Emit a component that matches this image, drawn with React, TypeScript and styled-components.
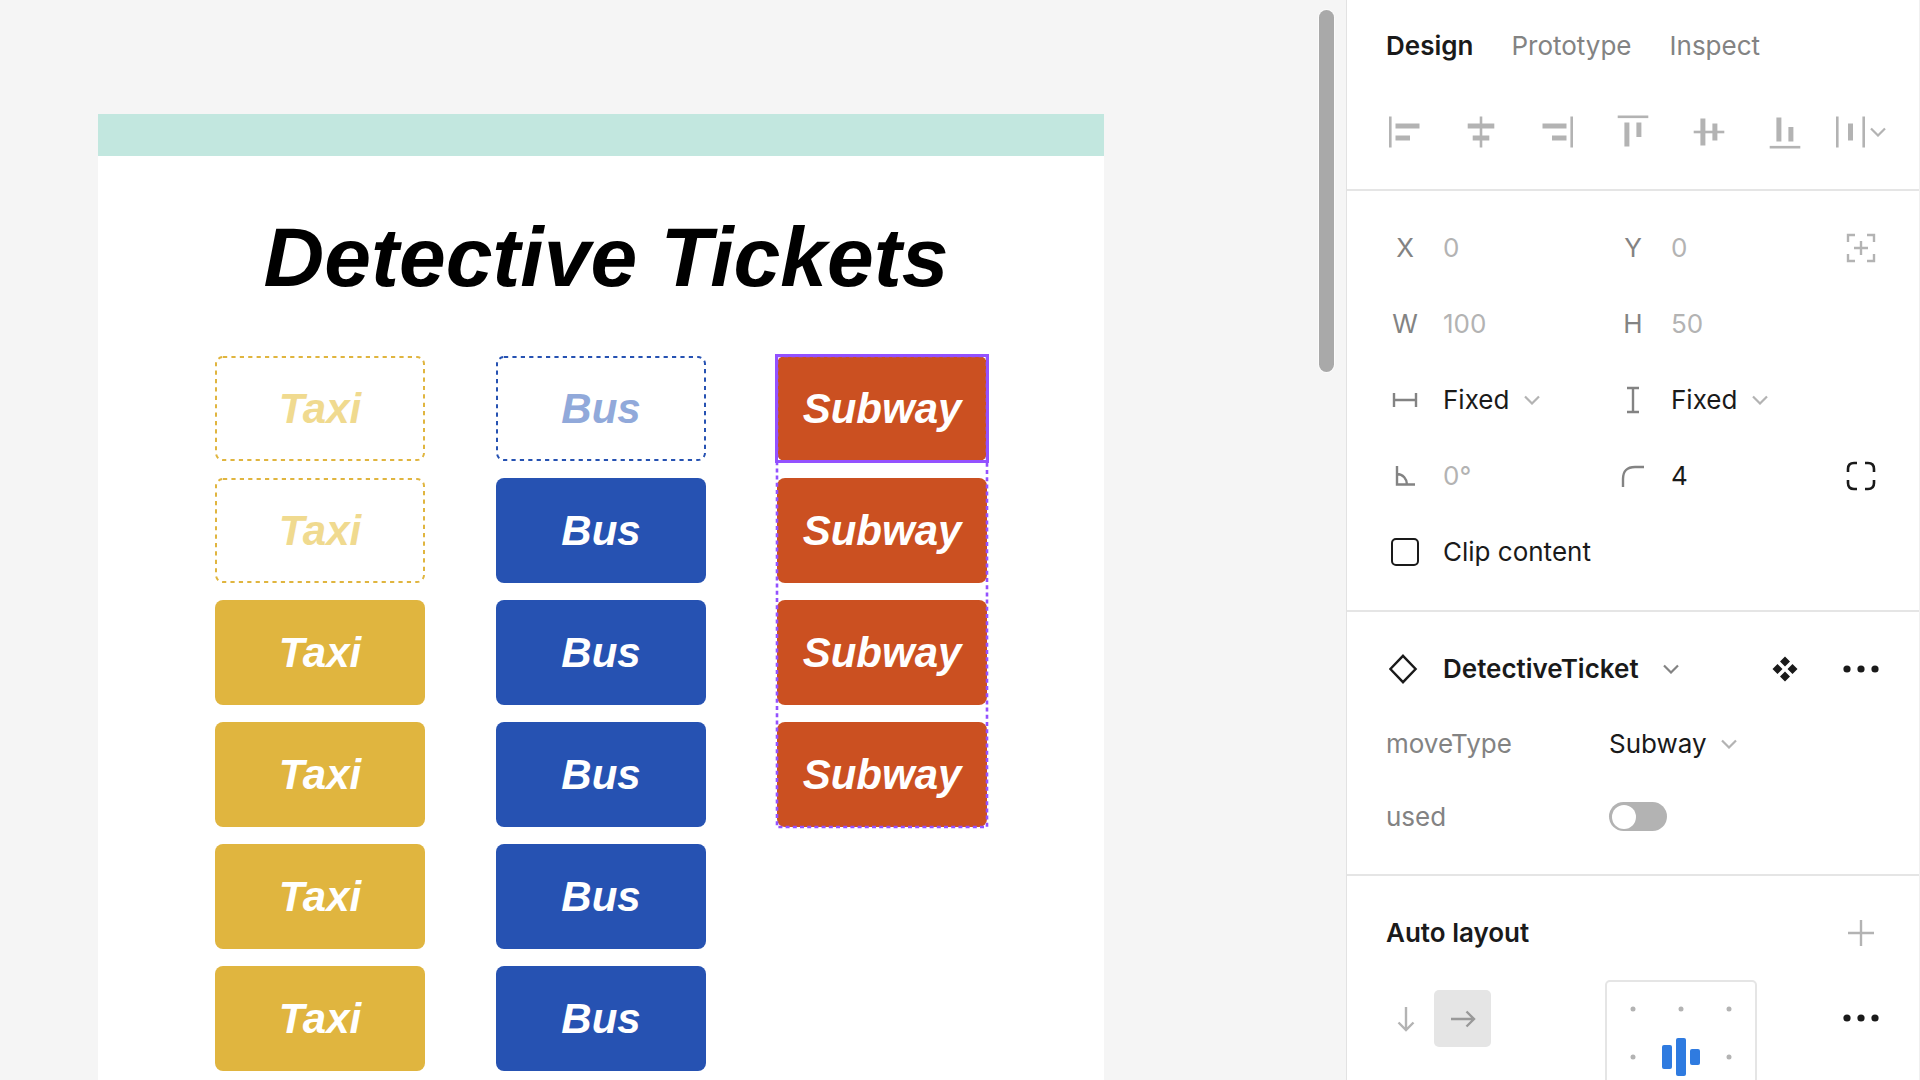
import React from 'react';
import styled, { createGlobalStyle } from 'styled-components';

const GlobalStyle = createGlobalStyle`
  *, *::before, *::after { box-sizing: border-box; }
  body { margin: 0; overflow: hidden; }
  button, input, select { font: inherit; color: inherit; }
`;

const color = {
  text: '#1a1a1a',
  muted: '#838383',
  faint: '#b3b3b3',
  line: '#e5e5e5',
  canvas: '#f5f5f5',
  select: '#9351ff',
};

const Screen = styled.div`
  display: flex;
  height: 100vh;
  overflow: hidden;
  background: ${color.canvas};
`;

/* ---------- Canvas ---------- */

const Canvas = styled.main`
  position: relative;
  flex: 1;
  min-width: 0;
  display: flex;
  padding: 114px 242px 0 98px;
  overflow: hidden;
  font-family: "Liberation Sans", Arial, Helvetica, sans-serif;
`;

const ScrollThumb = styled.div`
  position: absolute;
  top: 10px;
  right: 12px;
  width: 15px;
  height: 362px;
  border-radius: 8px;
  background: #a9a9a9;
  box-shadow: 0 0 0 1px #fbfbfb;
`;

const Board = styled.section`
  flex: 1;
  min-width: 0;
  min-height: 100%;
  background: #fff;
  border-top: 42px solid #c2e7df;
  padding-top: 59px;
`;

const BoardTitle = styled.h1`
  margin: 0 0 57px;
  padding-left: 10px;
  font-size: 84px;
  line-height: 84px;
  font-style: italic;
  font-weight: 700;
  color: #000;
  text-align: center;
  white-space: nowrap;
`;

const Columns = styled.div`
  display: flex;
  justify-content: center;
  align-items: flex-start;
  gap: 71px;
`;

const Column = styled.div`
  position: relative;
  display: flex;
  flex-direction: column;
  gap: 17px;
`;

type Move = 'Taxi' | 'Bus' | 'Subway';

const palette: Record<Move, { fill: string; used: string }> = {
  Taxi: { fill: '#e0b53f', used: '#f0da8f' },
  Bus: { fill: '#2652b2', used: '#91a9da' },
  Subway: { fill: '#cb5021', used: '#e5a78f' },
};

const TicketBox = styled.div<{ $move: Move; $used: boolean }>`
  position: relative;
  display: flex;
  align-items: center;
  justify-content: center;
  width: 210px;
  height: 105px;
  border-radius: 8px;
  font-size: 42px;
  line-height: 48px;
  font-style: italic;
  font-weight: 700;
  background: ${(p) => (p.$used ? 'transparent' : palette[p.$move].fill)};
  color: ${(p) => (p.$used ? palette[p.$move].used : '#fff')};
`;

const Overlay = styled.svg<{ $inset: number }>`
  position: absolute;
  top: ${(p) => p.$inset}px;
  left: ${(p) => p.$inset}px;
  width: calc(100% - ${(p) => p.$inset * 2}px);
  height: calc(100% - ${(p) => p.$inset * 2}px);
  overflow: visible;
  pointer-events: none;
`;

const Selected = styled.div`
  position: absolute;
  inset: -2px;
  border: 3px solid ${color.select};
`;

function Dashes({ stroke, dash, radius = 0, inset = 0, width = 2 }: { stroke: string; dash: string; radius?: number; inset?: number; width?: number }) {
  return (
    <Overlay $inset={inset} aria-hidden="true">
      <rect width="100%" height="100%" rx={radius} fill="none" stroke={stroke} strokeWidth={width} strokeDasharray={dash} />
    </Overlay>
  );
}

function Ticket({ move, used = false, selected = false }: { move: Move; used?: boolean; selected?: boolean }) {
  return (
    <TicketBox $move={move} $used={used}>
      {move}
      {used && <Dashes stroke={palette[move].fill} dash="4.2 4.2" radius={7} inset={1} />}
      {selected && <Selected />}
    </TicketBox>
  );
}

/* ---------- Panel ---------- */

const Panel = styled.aside`
  flex: 0 0 574px;
  background: #fff;
  border-left: 1px solid #e2e2e2;
  border-right: 1px solid #f0f0f0;
  color: ${color.text};
  font-family: Inter, "Liberation Sans", sans-serif;
  font-size: 26px;
  line-height: 32px;
  overflow: hidden;
`;

const Section = styled.section<{ $top?: number; $bottom?: number }>`
  padding: ${(p) => p.$top ?? 19}px 20px ${(p) => p.$bottom ?? 20}px;
  border-bottom: 2px solid ${color.line};
`;

const Tabs = styled.nav`
  display: flex;
  align-items: center;
  gap: 38px;
  height: 76px;
  padding-left: 19px;
`;

const Tab = styled.button<{ $active?: boolean }>`
  padding: 0;
  border: 0;
  background: none;
  cursor: pointer;
  font-weight: ${(p) => (p.$active ? 600 : 400)};
  color: ${(p) => (p.$active ? color.text : color.muted)};
`;

const Row = styled.div<{ $h?: number }>`
  display: grid;
  grid-template-columns: repeat(7, minmax(0, 1fr));
  align-items: center;
  height: ${(p) => p.$h ?? 76}px;
`;

const IconButton = styled.button<{ $c?: string }>`
  display: flex;
  align-items: center;
  justify-content: center;
  height: 56px;
  padding: 0;
  border: 0;
  background: none;
  cursor: pointer;
  color: ${(p) => p.$c ?? color.faint};
`;

const Field = styled.label`
  grid-column: span 3;
  display: grid;
  grid-template-columns: 1fr 2fr;
  align-items: center;
`;

const Mark = styled.span<{ $c?: string }>`
  display: flex;
  justify-content: center;
  color: ${(p) => p.$c ?? color.muted};
`;

const TextInput = styled.input<{ $strong?: boolean }>`
  width: 100%;
  min-width: 0;
  padding: 0;
  border: 0;
  outline: 0;
  background: none;
  color: ${(p) => (p.$strong ? color.text : color.faint)};
`;

const Picker = styled.span`
  display: flex;
  align-items: center;
  gap: 14px;
  color: ${color.faint};
`;

const Select = styled.select`
  appearance: none;
  padding: 0;
  border: 0;
  outline: 0;
  background: none;
  color: ${color.text};
  cursor: pointer;
`;

const Check = styled.input`
  appearance: none;
  width: 28px;
  height: 28px;
  margin: 0;
  border: 2px solid ${color.text};
  border-radius: 5px;
`;

const CheckLabel = styled.label`
  grid-column: span 5;
`;

const ComponentName = styled.button`
  grid-column: span 4;
  display: flex;
  align-items: center;
  gap: 24px;
  padding: 0;
  border: 0;
  background: none;
  cursor: pointer;
  font-weight: 600;
  svg { color: ${color.muted}; }
`;

const PropLabel = styled.label`
  grid-column: span 3;
  padding-left: 19px;
  color: ${color.muted};
`;

const PropValue = styled.div`
  grid-column: span 4;
  padding-left: 14px;
`;

const Toggle = styled.input`
  appearance: none;
  display: flex;
  align-items: center;
  width: 58px;
  height: 29px;
  margin: 0;
  padding: 0 3px;
  border-radius: 15px;
  background: ${color.faint};
  cursor: pointer;
  &::before {
    content: '';
    width: 24px;
    height: 24px;
    border-radius: 50%;
    background: #fff;
  }
  &:checked { justify-content: flex-end; }
`;

const SectionTitle = styled.h2`
  grid-column: span 6;
  margin: 0;
  padding-left: 19px;
  font-size: 26px;
  line-height: 32px;
  font-weight: 600;
`;

const LayoutRow = styled.div`
  display: grid;
  grid-template-columns: repeat(7, minmax(0, 1fr));
  align-items: start;
  padding-top: 9px;
`;

const Directions = styled.div`
  grid-column: span 3;
  display: flex;
  padding: 10px 0 0 10px;
`;

const Direction = styled.button<{ $on?: boolean }>`
  display: flex;
  align-items: center;
  justify-content: center;
  width: 57px;
  height: 57px;
  padding: 0;
  border: 0;
  border-radius: 5px;
  cursor: pointer;
  background: ${(p) => (p.$on ? color.line : 'none')};
  color: ${(p) => (p.$on ? '#999' : color.faint)};
`;

const AlignSlot = styled.div`
  grid-column: span 3;
  padding-left: 10px;
`;

const AlignBox = styled.button`
  display: block;
  width: 152px;
  height: 154px;
  padding: 0;
  border: 2px solid ${color.line};
  border-radius: 5px;
  background: #fff;
`;

const MoreSlot = styled.div`
  display: grid;
  padding-top: 10px;
`;

/* ---------- Icons ---------- */

type Box = [number, number, number, number];

/* Filled bars on a field 34 high */
function Bars({ bars, w = 32 }: { bars: Box[]; w?: number }) {
  return (
    <svg width={w} height="34" viewBox={`0 0 ${w} 34`} fill="currentColor" aria-hidden="true">
      {bars.map(([x, y, bw, bh], i) => (
        <rect key={i} x={x} y={y} width={bw} height={bh} />
      ))}
    </svg>
  );
}

function Stroke({ d, w = 30, h = 30, sw = 2.4 }: { d: string; w?: number; h?: number; sw?: number }) {
  return (
    <svg width={w} height={h} viewBox={`0 0 ${w} ${h}`} fill="none" stroke="currentColor" strokeWidth={sw} aria-hidden="true">
      <path d={d} />
    </svg>
  );
}

const Chevron = () => <Stroke w={16} h={10} sw={2.2} d="M1 1.5 L8 8.5 L15 1.5" />;

const Dots = () => (
  <svg width="36" height="8" viewBox="0 0 36 8" fill="currentColor" aria-hidden="true">
    <circle cx="4" cy="4" r="3.6" />
    <circle cx="18" cy="4" r="3.6" />
    <circle cx="32" cy="4" r="3.6" />
  </svg>
);

const alignIcons: { name: string; bars: Box[] }[] = [
  { name: 'Align left', bars: [[0, 1.5, 2.6, 31], [6.5, 8.5, 24, 5], [6.5, 20.5, 14.5, 5]] },
  { name: 'Align horizontal centers', bars: [[14.7, 1.5, 2.6, 31], [2.7, 8.5, 26.6, 5], [7.7, 20.5, 16.6, 5]] },
  { name: 'Align right', bars: [[29.4, 1.5, 2.6, 31], [1.5, 8.5, 24, 5], [11, 20.5, 14.5, 5]] },
  { name: 'Align top', bars: [[0.7, 0.5, 30.6, 2.6], [7.4, 7.5, 5, 24], [19.4, 7.5, 5, 14.5]] },
  { name: 'Align vertical centers', bars: [[0.7, 15.7, 30.6, 2.6], [7.4, 3.5, 5, 27], [19.4, 8.5, 5, 17]] },
  { name: 'Align bottom', bars: [[0.7, 30.9, 30.6, 2.6], [7.4, 2.5, 5, 24], [19.4, 12, 5, 14.5]] },
];

const AlignGrid = () => (
  <svg width="148" height="150" viewBox="0 0 148 150" fill={color.faint} aria-hidden="true">
    {[27, 75, 123].map((y) =>
      [26, 74, 122].map((x) => (x === 74 && y === 75 ? null : <circle key={`${x}-${y}`} cx={x} cy={y} r="2.5" />)),
    )}
    <g fill="#2f7be0">
      <rect x="55" y="63" width="10" height="24" rx="2" />
      <rect x="69" y="56" width="10" height="38" rx="2" />
      <rect x="83" y="67" width="10" height="16" rx="2" />
    </g>
  </svg>
);

/* ---------- Screen ---------- */

export default function App() {
  return (
    <Screen>
      <GlobalStyle />
      <Canvas>
        <Board>
          <BoardTitle>Detective Tickets</BoardTitle>
          <Columns>
            <Column>
              {[true, true, false, false, false, false].map((used, i) => (
                <Ticket key={i} move="Taxi" used={used} />
              ))}
            </Column>
            <Column>
              {[true, false, false, false, false, false].map((used, i) => (
                <Ticket key={i} move="Bus" used={used} />
              ))}
            </Column>
            <Column>
              {[true, false, false, false].map((selected, i) => (
                <Ticket key={i} move="Subway" selected={selected} />
              ))}
              <Dashes stroke={color.select} dash="4 3.2" width={2.6} />
            </Column>
          </Columns>
        </Board>
        <ScrollThumb />
      </Canvas>

      <Panel>
        <Section $top={8} $bottom={10}>
          <Tabs>
            <Tab $active>Design</Tab>
            <Tab>Prototype</Tab>
            <Tab>Inspect</Tab>
          </Tabs>
          <Row $h={95}>
            {alignIcons.map((icon) => (
              <IconButton key={icon.name} aria-label={icon.name}>
                <Bars bars={icon.bars} />
              </IconButton>
            ))}
            <IconButton aria-label="Distribute">
              <Bars w={34} bars={[[0, 1.5, 2.6, 31], [12, 8.5, 5, 17], [26.4, 1.5, 2.6, 31]]} />
              <Chevron />
            </IconButton>
          </Row>
        </Section>

        <Section>
          <Row>
            <Field><Mark>X</Mark><TextInput defaultValue="0" /></Field>
            <Field><Mark>Y</Mark><TextInput defaultValue="0" /></Field>
            <IconButton aria-label="Absolute position">
              <Stroke d="M2 9V2H9 M21 2H28V9 M28 21V28H21 M9 28H2V21 M15 8V22 M8 15H22" />
            </IconButton>
          </Row>
          <Row>
            <Field><Mark>W</Mark><TextInput defaultValue="100" /></Field>
            <Field><Mark>H</Mark><TextInput defaultValue="50" /></Field>
          </Row>
          <Row>
            <Field>
              <Mark><Stroke w={26} h={14} d="M2 0V14 M24 0V14 M2 7H24" /></Mark>
              <Picker>
                <Select aria-label="Horizontal resizing"><option>Fixed</option><option>Hug</option><option>Fill</option></Select>
                <Chevron />
              </Picker>
            </Field>
            <Field>
              <Mark><Stroke w={14} h={28} d="M1 2H13 M1 26H13 M7 2V26" /></Mark>
              <Picker>
                <Select aria-label="Vertical resizing"><option>Fixed</option><option>Hug</option><option>Fill</option></Select>
                <Chevron />
              </Picker>
            </Field>
          </Row>
          <Row>
            <Field>
              <Mark><Stroke w={20} h={20} d="M2 0V18.5H20 M2 8C8 8 12 13 12 18.5" /></Mark>
              <TextInput aria-label="Rotation" defaultValue="0°" />
            </Field>
            <Field>
              <Mark><Stroke w={24} h={22} d="M2 22V14Q2 2 14 2H23" /></Mark>
              <TextInput aria-label="Corner radius" $strong defaultValue="4" />
            </Field>
            <IconButton $c={color.text} aria-label="Independent corners">
              <Stroke sw={2.6} d="M2 11V8Q2 2 8 2H11 M19 2H22Q28 2 28 8V11 M28 19V22Q28 28 22 28H19 M11 28H8Q2 28 2 22V19" />
            </IconButton>
          </Row>
          <Row>
            <Mark><Check id="clip" type="checkbox" /></Mark>
            <CheckLabel htmlFor="clip">Clip content</CheckLabel>
          </Row>
        </Section>

        <Section $bottom={21}>
          <Row>
            <Mark $c={color.text}><Stroke w={32} h={30} sw={2.4} d="M14 1.8L26.6 15L14 28.2L1.4 15Z" /></Mark>
            <ComponentName>DetectiveTicket<Chevron /></ComponentName>
            <IconButton $c={color.text} aria-label="Go to main component">
              <svg width="26" height="26" viewBox="0 0 26 26" fill="currentColor" aria-hidden="true">
                <path d="M13 .5L18 5.5L13 10.500L8 5.500Z M13 15.500L18 20.500L13 25.500L8 20.500Z M5.500 8L10.500 13L5.500 18L.5 13Z M20.500 8L25.500 13L20.500 18L15.500 13Z" />
              </svg>
            </IconButton>
            <IconButton $c={color.text} aria-label="More instance options"><Dots /></IconButton>
          </Row>
          <Row $h={73}>
            <PropLabel htmlFor="moveType">moveType</PropLabel>
            <PropValue>
              <Picker>
                <Select id="moveType" defaultValue="Subway"><option>Taxi</option><option>Bus</option><option>Subway</option></Select>
                <Chevron />
              </Picker>
            </PropValue>
          </Row>
          <Row $h={73}>
            <PropLabel htmlFor="used">used</PropLabel>
            <PropValue><Toggle id="used" type="checkbox" role="switch" /></PropValue>
          </Row>
        </Section>

        <Section>
          <Row>
            <SectionTitle>Auto layout</SectionTitle>
            <IconButton aria-label="Add auto layout"><Stroke w={26} h={26} d="M13 0V26 M0 13H26" /></IconButton>
          </Row>
          <LayoutRow>
            <Directions>
              <Direction aria-label="Vertical direction"><Stroke w={18} h={26} d="M9 1V24 M1.500 16.500L9 24L16.500 16.500" /></Direction>
              <Direction $on aria-label="Horizontal direction"><Stroke w={26} h={18} d="M1 9H24 M16.500 1.500L24 9L16.500 16.500" /></Direction>
            </Directions>
            <AlignSlot>
              <AlignBox aria-label="Alignment"><AlignGrid /></AlignBox>
            </AlignSlot>
            <MoreSlot>
              <IconButton $c={color.text} aria-label="More layout options"><Dots /></IconButton>
            </MoreSlot>
          </LayoutRow>
        </Section>
      </Panel>
    </Screen>
  );
}
